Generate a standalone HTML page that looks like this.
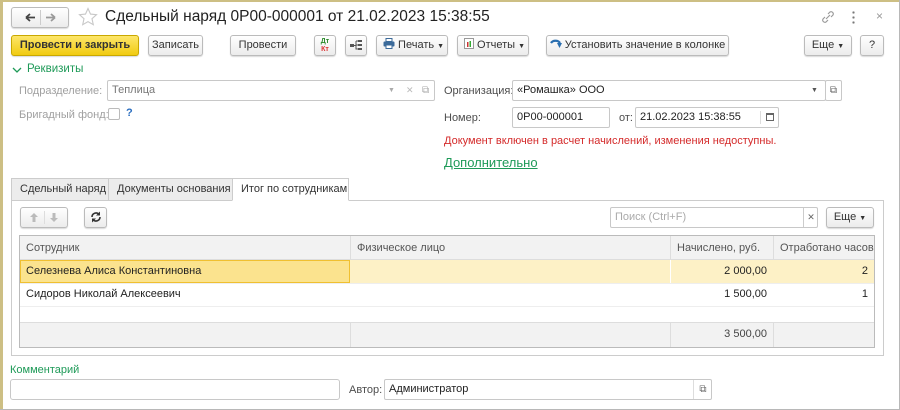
<!DOCTYPE html><html><head><meta charset="utf-8"><style>
*{box-sizing:border-box}
body{margin:0;width:900px;height:410px;overflow:hidden;background:#fff;font-family:"Liberation Sans",Arial,sans-serif;font-size:11px;color:#333;position:relative}
.a{position:absolute;white-space:nowrap}
.btn{position:absolute;height:21px;border:1px solid #bbb;border-radius:3px;background:linear-gradient(#fff,#ececec);box-shadow:0 1px 1px rgba(0,0,0,.15);text-align:center;line-height:19px;color:#333;white-space:nowrap}
.fld{position:absolute;height:21px;border:1px solid #c8c8c8;border-radius:2px;background:#fff;line-height:19px;padding-left:4px;white-space:nowrap}
.lbl{position:absolute;color:#4d4d4d;line-height:14px;white-space:nowrap}
.gray{color:#a0a0a0}
.cell{position:absolute;line-height:22px;padding:0 6px;white-space:nowrap}
</style></head><body>
<div class="a" style="left:0;top:0;width:3px;height:410px;background:#cdbf84"></div>
<div class="a" style="left:0;top:0;width:900px;height:2px;background:#cdbf84"></div>
<div class="a" style="right:0;top:0;width:1px;height:410px;background:#b8b8b8"></div>
<div class="a" style="left:0;bottom:0;width:900px;height:1px;background:#b8b8b8"></div>

<div class="btn" style="left:11px;top:7px;width:58px;height:21px">
<svg class="a" style="left:0;top:0" width="56" height="19"><path d="M14 9.5h9M14 9.5l4-3.5M14 9.5l4 3.5" stroke="#444" stroke-width="1.8" fill="none"/><path d="M28.5 2v15" stroke="#ccc"/><path d="M34 9.5h9M43 9.5l-4-3.5M43 9.5l-4 3.5" stroke="#999" stroke-width="1.8" fill="none"/></svg></div>
<svg class="a" style="left:78px;top:7px" width="20" height="20"><path d="M10 1.5l2.5 5.6 6 .6-4.5 4 1.3 6-5.3-3.1-5.3 3.1 1.3-6-4.5-4 6-.6z" fill="none" stroke="#c8c8c8" stroke-width="1.1"/></svg>
<div class="a" style="left:105px;top:8px;font-size:15.5px;color:#222">Сдельный наряд 0P00-000001 от 21.02.2023 15:38:55</div>
<svg class="a" style="left:820px;top:9px" width="16" height="16"><path d="M6 10l4-4M5 8l-2 2a2.2 2.2 0 003 3l2-2M11 8l2-2a2.2 2.2 0 00-3-3l-2 2" stroke="#999" fill="none" stroke-width="1.1"/></svg>
<div class="a" style="left:852px;top:10px;width:3px;height:14px;background:radial-gradient(circle,#777 1px,transparent 1.3px) 0 0/3px 5px"></div>
<div class="a" style="left:876px;top:9px;color:#999;font-size:12px">×</div>

<div class="btn" style="left:11px;top:35px;width:128px;background:linear-gradient(#fde66a,#f1cb11);border-color:#c9a800;font-weight:bold;color:#333">Провести и закрыть</div>
<div class="btn" style="left:148px;top:35px;width:55px">Записать</div>
<div class="btn" style="left:230px;top:35px;width:66px">Провести</div>
<div class="btn" style="left:314px;top:35px;width:22px;font-size:7px;line-height:8px;padding-top:2px;font-weight:bold"><span style="color:#2a8a2a">Дт</span><br><span style="color:#d33">Кт</span></div>
<div class="btn" style="left:345px;top:35px;width:22px"><svg width="14" height="12" style="margin-top:3px"><rect x="1" y="5" width="4" height="3" fill="#555"/><rect x="9" y="1" width="4" height="2" fill="#555"/><rect x="9" y="5" width="4" height="2" fill="#555"/><rect x="9" y="9" width="4" height="2" fill="#555"/><path d="M5 6.5h2M7 2v8.5M7 2h2M7 6h2M7 10h2" stroke="#555"/></svg></div>
<div class="btn" style="left:376px;top:35px;width:72px;text-align:left;padding-left:6px"><svg width="12" height="11" style="vertical-align:-1px"><rect x="3" y="0.5" width="6" height="3" fill="#fff" stroke="#3b6a9a"/><rect x="0.5" y="3.5" width="11" height="5" rx="1" fill="#3b6a9a"/><rect x="3" y="7" width="6" height="3.5" fill="#fff" stroke="#3b6a9a"/></svg> Печать <span style="font-size:7px">▼</span></div>
<div class="btn" style="left:457px;top:35px;width:72px;text-align:left;padding-left:6px"><svg width="10" height="11" style="vertical-align:-1px"><rect x="0.5" y="0.5" width="9" height="10" fill="#fff" stroke="#999"/><rect x="3" y="4" width="1.5" height="5" fill="#c33"/><rect x="5.5" y="3" width="1.5" height="6" fill="#3a3"/></svg> Отчеты <span style="font-size:7px">▼</span></div>
<div class="btn" style="left:546px;top:35px;width:183px"><svg width="12" height="11" style="vertical-align:-1px"><path d="M1 5a5 4 0 0 1 9 0" stroke="#2b6fb0" stroke-width="2.2" fill="none"/><path d="M7 5l5 0-2.5 5z" fill="#2b6fb0"/></svg> Установить значение в колонке</div>
<div class="btn" style="left:804px;top:35px;width:48px">Еще <span style="font-size:7px">▼</span></div>
<div class="btn" style="left:860px;top:35px;width:24px">?</div>

<svg class="a" style="left:12px;top:66px" width="10" height="8"><path d="M1 2l4 4 4-4" stroke="#1e9a58" fill="none" stroke-width="1.3"/></svg>
<div class="a" style="left:27px;top:63px;color:#1e9a58;font-size:11.5px">Реквизиты</div>
<div class="lbl gray" style="left:19px;top:84px">Подразделение:</div>
<div class="fld gray" style="left:107px;top:80px;width:328px;color:#777">Теплица<span class="a" style="left:280px;top:0;font-size:7px;color:#aaa">▼</span><span class="a" style="left:298px;top:0;color:#bbb;font-size:9px">✕</span><span class="a" style="left:314px;top:0;color:#aaa;font-size:10px">⧉</span></div>
<div class="lbl gray" style="left:19px;top:108px">Бригадный фонд:</div>
<div class="a" style="left:108px;top:108px;width:12px;height:12px;border:1px solid #bbb;border-radius:2px"></div>
<div class="a" style="left:126px;top:107px;color:#2a6ec0;font-weight:bold">?</div>

<div class="lbl" style="left:444px;top:84px">Организация:</div>
<div class="fld" style="left:512px;top:80px;width:314px;color:#222">«Ромашка» ООО<span class="a" style="left:298px;top:0;font-size:7px;color:#555">▼</span></div>
<div class="fld" style="left:825px;top:80px;width:17px;padding:0;text-align:center;font-size:10px;color:#666">⧉</div>
<div class="lbl" style="left:444px;top:111px">Номер:</div>
<div class="fld" style="left:512px;top:107px;width:98px;color:#222">0P00-000001</div>
<div class="lbl" style="left:619px;top:111px">от:</div>
<div class="fld" style="left:635px;top:107px;width:144px;color:#222">21.02.2023 15:38:55<span class="a" style="left:124px;top:3px;width:18px;height:13px;border-left:1px solid #ddd"></span><span class="a" style="left:130px;top:5px;width:8px;height:8px;border:1px solid #666;border-top-width:2px"></span></div>
<div class="a" style="left:444px;top:135px;color:#d42a2a">Документ включен в расчет начислений, изменения недоступны.</div>
<div class="a" style="left:444px;top:155px;color:#1e9a58;font-size:13px;text-decoration:underline">Дополнительно</div>

<div class="a" style="left:11px;top:200px;width:873px;height:156px;border:1px solid #ccc"></div>
<div class="a" style="left:11px;top:178px;width:98px;height:23px;border:1px solid #ccc;background:#ececec;line-height:21px;padding-left:8px">Сдельный наряд</div>
<div class="a" style="left:108px;top:178px;width:125px;height:23px;border:1px solid #ccc;background:#ececec;line-height:21px;padding-left:8px">Документы основания</div>
<div class="a" style="left:232px;top:178px;width:117px;height:23px;border:1px solid #ccc;border-bottom:1px solid #fff;background:#fff;line-height:21px;padding-left:8px">Итог по сотрудникам</div>

<div class="btn" style="left:20px;top:207px;width:48px"><svg class="a" style="left:0;top:0" width="46" height="19"><path d="M13 5l-4 4h2.5v5h3V9H17z" fill="#bbb"/><path d="M23.5 3v13" stroke="#ddd"/><path d="M33 14l-4-4h2.5V5h3v5H37z" fill="#bbb"/></svg></div>
<div class="btn" style="left:84px;top:207px;width:23px"><svg width="12" height="12" style="margin-top:3px"><path d="M2 6a4 4 0 0 1 7-2.6M10 6a4 4 0 0 1-7 2.6" stroke="#333" stroke-width="1.6" fill="none"/><path d="M10 0.5v4H6z" fill="#333"/><path d="M2 11.5v-4h4z" fill="#333"/></svg></div>
<div class="fld" style="left:610px;top:207px;width:208px;color:#aaa">Поиск (Ctrl+F)<span class="a" style="left:192px;top:0;width:15px;height:19px;border-left:1px solid #ccc;text-align:center;font-size:9px;color:#666">✕</span></div>
<div class="btn" style="left:826px;top:207px;width:48px">Еще <span style="font-size:7px">▼</span></div>

<div class="a" style="left:19px;top:235px;width:856px;height:113px;border:1px solid #bbb;background:#fff"></div>
<div class="a" style="left:20px;top:236px;width:854px;height:24px;background:#f2f2f2;border-bottom:1px solid #ddd"></div>
<div class="a" style="left:20px;top:322px;width:854px;height:25px;background:#f2f2f2;border-top:1px solid #ddd"></div>
<div class="a" style="left:20px;top:260px;width:854px;height:23px;background:#fdf1c6"></div>
<div class="a" style="left:20px;top:260px;width:330px;height:23px;background:#fbe38e;border:1px solid #f0c030"></div>
<div class="a" style="left:20px;top:283px;width:854px;height:1px;background:#eee"></div>
<div class="a" style="left:20px;top:306px;width:854px;height:1px;background:#eee"></div>
<div class="a" style="left:350px;top:236px;width:1px;height:24px;background:#ddd"></div>
<div class="a" style="left:670px;top:236px;width:1px;height:24px;background:#ddd"></div>
<div class="a" style="left:773px;top:236px;width:1px;height:24px;background:#ddd"></div>
<div class="a" style="left:350px;top:322px;width:1px;height:25px;background:#ddd"></div>
<div class="a" style="left:670px;top:322px;width:1px;height:25px;background:#ddd"></div>
<div class="a" style="left:773px;top:322px;width:1px;height:25px;background:#ddd"></div>
<div class="a" style="left:670px;top:260px;width:1px;height:23px;background:#fff"></div>
<div class="cell" style="left:20px;top:237px;color:#555">Сотрудник</div>
<div class="cell" style="left:351px;top:237px;color:#555">Физическое лицо</div>
<div class="cell" style="left:671px;top:237px;color:#555">Начислено, руб.</div>
<div class="cell" style="left:774px;top:237px;color:#555">Отработано часов</div>
<div class="cell" style="left:20px;top:260px;color:#222">Селезнева Алиса Константиновна</div>
<div class="cell" style="left:671px;top:260px;width:102px;text-align:right;color:#222">2 000,00</div>
<div class="cell" style="left:774px;top:260px;width:100px;text-align:right;color:#222">2</div>
<div class="cell" style="left:20px;top:283px;color:#222">Сидоров Николай Алексеевич</div>
<div class="cell" style="left:671px;top:283px;width:102px;text-align:right;color:#222">1 500,00</div>
<div class="cell" style="left:774px;top:283px;width:100px;text-align:right;color:#222">1</div>
<div class="cell" style="left:671px;top:323px;width:102px;text-align:right;color:#444">3 500,00</div>

<div class="a" style="left:10px;top:364px;color:#1e9a58">Комментарий</div>
<div class="fld" style="left:10px;top:379px;width:330px;border-radius:3px"></div>
<div class="lbl" style="left:349px;top:383px">Автор:</div>
<div class="fld" style="left:384px;top:379px;width:328px;color:#222">Администратор<span class="a" style="left:308px;top:0;width:19px;height:19px;border-left:1px solid #ddd;text-align:center;font-size:10px;color:#666">⧉</span></div>
</body></html>
